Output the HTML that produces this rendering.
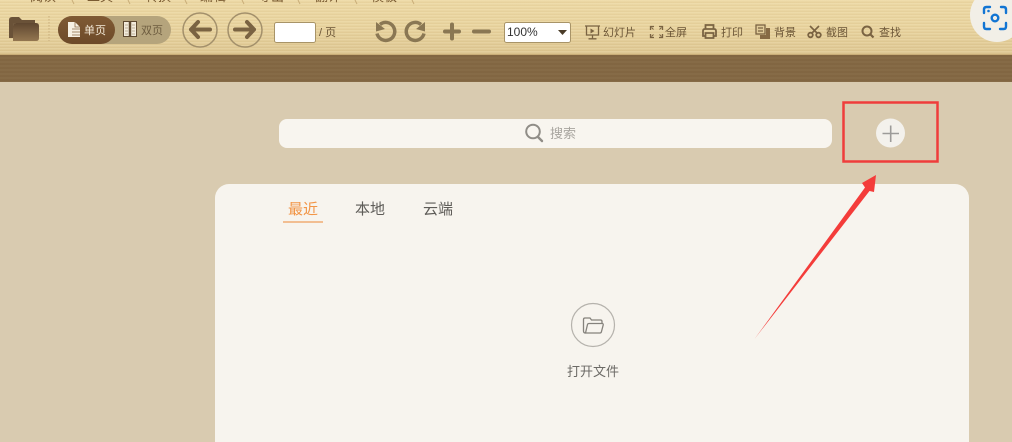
<!DOCTYPE html>
<html lang="zh"><head><meta charset="utf-8"><style>
html,body{margin:0;padding:0;overflow:hidden;width:1012px;height:442px}
body{position:relative;background:#d9cbb0;font-family:"Liberation Sans","Noto Sans CJK SC",sans-serif}
.a{position:absolute;white-space:nowrap}
#bar{left:0;top:0;width:1012px;height:54px;background:repeating-linear-gradient(180deg,rgba(255,245,210,.16) 0 1.5px,rgba(150,110,50,.05) 1.5px 3px),linear-gradient(180deg,#ecd8a4 0,#e8d39e 50%,#ddc692 100%);border-bottom:1px solid #c8ad78}
#band{left:0;top:55px;width:1012px;height:27px;background:repeating-linear-gradient(180deg,rgba(0,0,0,.02) 0 2px,rgba(255,255,255,.02) 2px 4px),#846843}
.t{font-size:11px;line-height:14px;color:#6b5536}
.top{font-size:13px;line-height:14px;color:#7a5b32;top:-10px}
.tab{font-size:15px;line-height:18px;top:201px;color:#5e5c58}
</style></head><body>
<div class="a" id="bar"></div>
<div class="a" id="band"></div>

<div class="a top" style="left:30px">阅读</div><div class="a top" style="left:87px">工具</div>
<div class="a top" style="left:145px">转换</div><div class="a top" style="left:200px">编辑</div>
<div class="a top" style="left:258px">导出</div><div class="a top" style="left:315px">翻译</div><div class="a top" style="left:371px">模板</div>

<svg class="a" style="left:0;top:0;display:block" width="1012" height="442" viewBox="0 0 1012 442">
<defs>
<linearGradient id="f" x1="0" y1="0" x2="0" y2="1"><stop offset="0" stop-color="#5f4730"/><stop offset="1" stop-color="#937650"/></linearGradient>
<linearGradient id="p" x1="0" y1="0" x2="0" y2="1"><stop offset="0" stop-color="#7f5a34"/><stop offset="1" stop-color="#6d4a29"/></linearGradient>
</defs>
<g stroke="#c9ad78" fill="none"><path d="M72 0l2 4M128 0l2 4M185 0l2 4M242 0l2 4M298 0l2 4M355 0l2 4M412 0l2 4"/></g>
<path d="M9 38V20q0-3 3-3h7l3 3h13v3H16q-3 0-3 3v12z" fill="#6a5238"/>
<path d="M13 41V26q0-3 3-3h20q3 0 3 3v12q0 3-3 3z" fill="url(#f)"/>
<path d="M49 16V41" stroke="#c9ae7c" stroke-dasharray="1.5 1.5"/>
<rect x="58" y="16" width="113" height="28" rx="14" fill="#b5a47c"/>
<rect x="58" y="16" width="57" height="28" rx="14" fill="url(#p)"/>
<path d="M68 22h7l5 5v10H68z" fill="#f7f1e4"/><path d="M72 29h8M72 32h8M72 35h8M75 22v5h5" stroke="#8a6a45" stroke-width=".8" fill="none"/>
<rect x="123" y="21" width="14" height="16" fill="#f3ecdc"/><rect x="123.500" y="21.500" width="13" height="15" fill="none" stroke="#5e4a30"/><path d="M130 21v16" stroke="#5e4a30" stroke-width="2.500"/><path d="M125 25h3M125 28h3M125 31h3M125 34h3M132 25h3M132 28h3M132 31h3M132 34h3" stroke="#aa9b80" stroke-width=".8"/>

<g fill="none" stroke="#a3906b" stroke-width="1.500"><circle cx="200" cy="30" r="17"/><circle cx="245" cy="30" r="17"/></g>
<g fill="none" stroke="#7a6342" stroke-width="4" stroke-linecap="round" stroke-linejoin="round"><path d="M210 29.500H191M198 22L191 29.500L198 37"/><path d="M235 29.500H254M247 22L254 29.500L247 37"/></g>

<rect x="274.500" y="22.500" width="41" height="20" rx="2" fill="#fff" stroke="#a89468"/>
<g fill="none" stroke="#8a7753" stroke-width="3.500"><path d="M380 24.500A9 9 0 1 1 377 33.500"/><path d="M421 24.500A9 9 0 1 0 424 33.500"/></g>
<path d="M376 22v9.500l9-2.500zM425 22v9.500l-9-2.500z" fill="#8a7753"/>
<path d="M445 31.500h14M452 24.500v14" stroke="#8a7753" stroke-width="4" stroke-linecap="round"/>
<path d="M474 31.500h15" stroke="#8a7753" stroke-width="4" stroke-linecap="round"/>
<rect x="504.500" y="22.500" width="66" height="20" rx="2" fill="#fff" stroke="#a89468"/>
<path d="M558 30h9l-4.500 5z" fill="#4a3c28"/>

<g fill="none" stroke="#7a6342" stroke-width="1.300">
<path d="M585 26h15M586.500 26v9h12v-9M592.500 35v3.500M588.500 38.800h8"/>
<path d="M650.500 30v-3.500h3.500M662.500 30v-3.500H659M650.500 34v3.500h3.500M662.500 34v3.500H659"/>
<path d="M651.500 27.500l2 2M661.500 27.500l-2 2M651.500 36.500l2-2M661.500 36.500l-2-2" stroke-width="1"/>
<path d="M705.500 29v-4h8v4M705 36h-2v-5q0-2 2-2h9q2 0 2 2v5h-2M705.500 33h8v5h-8z" stroke-width="1.800"/>
<rect x="756" y="25" width="9" height="9" fill="#e0cb98"/><path d="M758 28h5M758 31h5"/>
<circle cx="810.500" cy="35" r="2.300" stroke-width="1.800"/><circle cx="818.500" cy="35" r="2.300" stroke-width="1.800"/><path d="M812 33L819 26M817 33L810 26" stroke-width="1.600"/>
<circle cx="867" cy="31" r="4.500" stroke-width="2"/><path d="M870.500 34.500l3 3" stroke-width="2.200"/>
</g>
<path d="M766 28h4v11h-10v-4h6z" fill="#866a44"/>
<path d="M590.500 28.500l4 2.500-4 2.500z" fill="#7a6342"/>

<circle cx="997" cy="15" r="27" fill="#f2efe7"/>
<g fill="none" stroke="#1275d3" stroke-width="2.400" stroke-linecap="round">
<path d="M984 13V9.500Q984 7 986.500 7H990M1001 7H1003.500Q1006 7 1006 9.500V13M1006 23V26.500Q1006 29 1003.500 29H1000M990 29H986.500Q984 29 984 26.500V23"/>
<circle cx="995" cy="18" r="3.300"/></g><circle cx="988.500" cy="11" r="1.300" fill="#1275d3"/>

<rect x="279" y="119" width="553" height="29" rx="8" fill="#f8f5ef"/>
<circle cx="533" cy="131.500" r="6.800" fill="none" stroke="#908d87" stroke-width="2"/><path d="M538 137l4 4" stroke="#908d87" stroke-width="2.400" stroke-linecap="round"/>
<circle cx="890.500" cy="133" r="14.500" fill="#f3f1ec"/>
<path d="M882.500 133.500h16.500M890.700 125.500v16.500" stroke="#9c9b99" stroke-width="1.600"/>
<rect x="843.500" y="102.500" width="94" height="59" fill="none" stroke="#ef3d3b" stroke-width="2.500"/>

<path d="M215 442V198a14 14 0 0 1 14-14H955a14 14 0 0 1 14 14V442z" fill="#f7f4ee"/>
<path d="M283 222h40" stroke="#f0ab73" stroke-width="1.500"/>

<path d="M754.500 339L865 187.500L862 183L876 175L874 192L869.500 191Z" fill="#f43c3a"/>

<circle cx="593" cy="325" r="21.500" fill="none" stroke="#b5b2ac" stroke-width="1.200"/>
<path d="M585.500 333q-2 0-2-2V319.500q0-1.500 1.500-1.500h5l1.500 2h9q1.500 0 1.500 1.500v1.500" fill="none" stroke="#85827c" stroke-width="1.300"/>
<path d="M585.500 333L587.500 324.500q.3-1 1.500-1H602q1.500 0 1.200 1.500L601.500 331.500q-.3 1.500-1.500 1.500z" fill="none" stroke="#85827c" stroke-width="1.300"/>
</svg>

<div class="a t" style="left:84px;top:24px;color:#f4ead8">单页</div>
<div class="a t" style="left:141px;top:24px;color:#6e5d40">双页</div>
<div class="a t" style="left:319px;top:26px">/ 页</div>
<div class="a" style="left:507px;top:25px;font-size:12px;line-height:14px;color:#333">100%</div>
<div class="a t" style="left:603px;top:26px">幻灯片</div>
<div class="a t" style="left:665px;top:26px">全屏</div>
<div class="a t" style="left:721px;top:26px">打印</div>
<div class="a t" style="left:774px;top:26px">背景</div>
<div class="a t" style="left:826px;top:26px">截图</div>
<div class="a t" style="left:879px;top:26px">查找</div>

<div class="a" style="left:550px;top:126px;font-size:13px;line-height:16px;color:#a8a59f">搜索</div>
<div class="a tab" style="left:288px;color:#f29546">最近</div>
<div class="a tab" style="left:355px">本地</div>
<div class="a tab" style="left:423px">云端</div>
<div class="a" style="left:567px;top:363px;font-size:13px;line-height:17px;color:#6c6a66">打开文件</div>
</body></html>
